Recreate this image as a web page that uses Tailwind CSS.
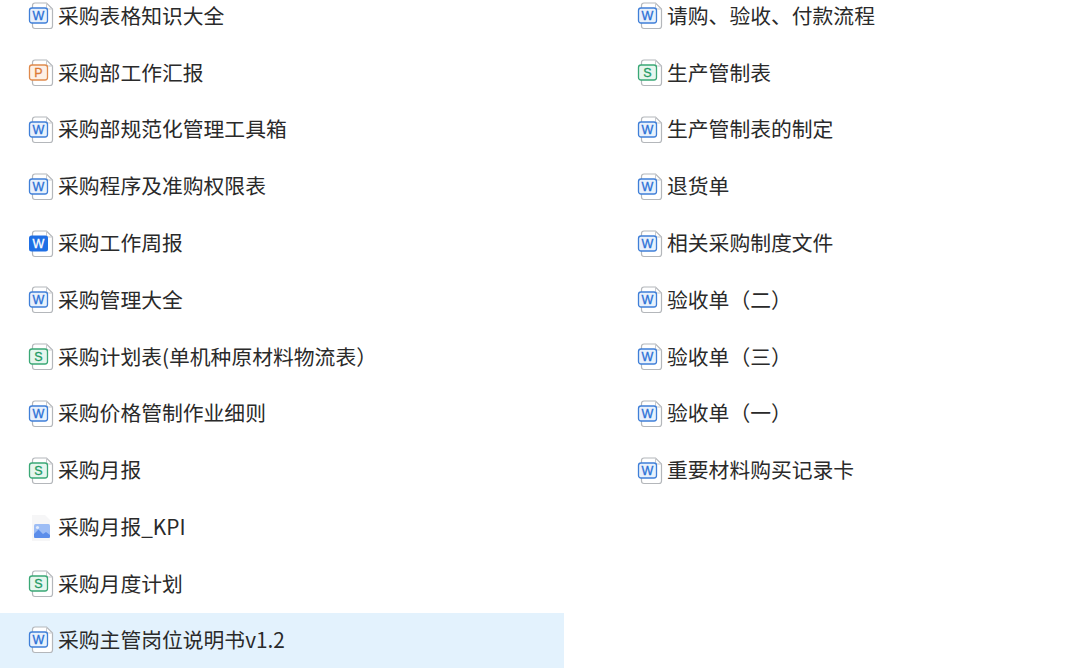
<!DOCTYPE html>
<html lang="zh-CN">
<head>
  <meta charset="UTF-8" />
  <title>采购文件</title>
  <script src="https://cdn.jsdelivr.net/npm/@tailwindcss/browser@4"></script>
</head>
<body class="h-[669px] overflow-hidden bg-white font-['Noto_Sans_CJK_SC',sans-serif] text-[20.8px] text-[#2a2a2a]">
  <svg class="hidden">
    <symbol id="page" viewBox="0 0 26 28">
      <path d="M4.5 3.5 Q4.5 1 7 1 H18.5 L24.5 7 V24 Q24.5 26.5 22 26.5 H7 Q4.5 26.5 4.5 24 Z" fill="#fff" stroke="#b4b7bb" stroke-width="1.2"/>
      <path d="M18.5 1 V5 Q18.5 7 20.5 7 H24.5" fill="none" stroke="#c9cbce" stroke-width="1"/>
    </symbol>
  </svg>

  <main class="-mt-[12px] flex">
    <!-- left column -->
    <ul class="w-[564px]">
      <li class="flex h-[56.8px] items-center pl-[28px]">
        <svg class="mr-[4px] h-[28px] w-[26px] font-['Liberation_Sans']" viewBox="0 0 26 28"><use href="#page"/><rect x="1.5" y="6" width="18" height="15" rx="2.5" fill="#e8f1fc" stroke="#3f7fd8" stroke-width="1.3"/><text x="10.5" y="18" text-anchor="middle" font-size="12.5" fill="#2a6fd6" stroke="#2a6fd6" stroke-width="0.3">W</text></svg>
        <span class="pb-[2px]">采购表格知识大全</span>
      </li>
      <li class="flex h-[56.8px] items-center pl-[28px]">
        <svg class="mr-[4px] h-[28px] w-[26px] font-['Liberation_Sans']" viewBox="0 0 26 28"><use href="#page"/><rect x="1.5" y="6" width="18" height="15" rx="2.5" fill="#fdf0e6" stroke="#e08a4c" stroke-width="1.3"/><text x="10.5" y="18" text-anchor="middle" font-size="12.5" fill="#dc7a36" stroke="#dc7a36" stroke-width="0.3">P</text></svg>
        <span class="pb-[2px]">采购部工作汇报</span>
      </li>
      <li class="flex h-[56.8px] items-center pl-[28px]">
        <svg class="mr-[4px] h-[28px] w-[26px] font-['Liberation_Sans']" viewBox="0 0 26 28"><use href="#page"/><rect x="1.5" y="6" width="18" height="15" rx="2.5" fill="#e8f1fc" stroke="#3f7fd8" stroke-width="1.3"/><text x="10.5" y="18" text-anchor="middle" font-size="12.5" fill="#2a6fd6" stroke="#2a6fd6" stroke-width="0.3">W</text></svg>
        <span class="pb-[2px]">采购部规范化管理工具箱</span>
      </li>
      <li class="flex h-[56.8px] items-center pl-[28px]">
        <svg class="mr-[4px] h-[28px] w-[26px] font-['Liberation_Sans']" viewBox="0 0 26 28"><use href="#page"/><rect x="1.5" y="6" width="18" height="15" rx="2.5" fill="#e8f1fc" stroke="#3f7fd8" stroke-width="1.3"/><text x="10.5" y="18" text-anchor="middle" font-size="12.5" fill="#2a6fd6" stroke="#2a6fd6" stroke-width="0.3">W</text></svg>
        <span class="pb-[2px]">采购程序及准购权限表</span>
      </li>
      <li class="flex h-[56.8px] items-center pl-[28px]">
        <svg class="mr-[4px] h-[28px] w-[26px] font-['Liberation_Sans']" viewBox="0 0 26 28"><use href="#page"/><rect x="1" y="5.5" width="19" height="16" rx="2.5" fill="#1f6fe5"/><text x="10.5" y="18" text-anchor="middle" font-size="12.5" fill="#fff" stroke="#fff" stroke-width="0.3">W</text></svg>
        <span class="pb-[2px]">采购工作周报</span>
      </li>
      <li class="flex h-[56.8px] items-center pl-[28px]">
        <svg class="mr-[4px] h-[28px] w-[26px] font-['Liberation_Sans']" viewBox="0 0 26 28"><use href="#page"/><rect x="1.5" y="6" width="18" height="15" rx="2.5" fill="#e8f1fc" stroke="#3f7fd8" stroke-width="1.3"/><text x="10.5" y="18" text-anchor="middle" font-size="12.5" fill="#2a6fd6" stroke="#2a6fd6" stroke-width="0.3">W</text></svg>
        <span class="pb-[2px]">采购管理大全</span>
      </li>
      <li class="flex h-[56.8px] items-center pl-[28px]">
        <svg class="mr-[4px] h-[28px] w-[26px] font-['Liberation_Sans']" viewBox="0 0 26 28"><use href="#page"/><rect x="1.5" y="6" width="18" height="15" rx="2.5" fill="#e6f6ee" stroke="#3aa876" stroke-width="1.3"/><text x="10.5" y="18" text-anchor="middle" font-size="12.5" fill="#1f9a63" stroke="#1f9a63" stroke-width="0.3">S</text></svg>
        <span class="pb-[2px]">采购计划表(单机种原材料物流表）</span>
      </li>
      <li class="flex h-[56.8px] items-center pl-[28px]">
        <svg class="mr-[4px] h-[28px] w-[26px] font-['Liberation_Sans']" viewBox="0 0 26 28"><use href="#page"/><rect x="1.5" y="6" width="18" height="15" rx="2.5" fill="#e8f1fc" stroke="#3f7fd8" stroke-width="1.3"/><text x="10.5" y="18" text-anchor="middle" font-size="12.5" fill="#2a6fd6" stroke="#2a6fd6" stroke-width="0.3">W</text></svg>
        <span class="pb-[2px]">采购价格管制作业细则</span>
      </li>
      <li class="flex h-[56.8px] items-center pl-[28px]">
        <svg class="mr-[4px] h-[28px] w-[26px] font-['Liberation_Sans']" viewBox="0 0 26 28"><use href="#page"/><rect x="1.5" y="6" width="18" height="15" rx="2.5" fill="#e6f6ee" stroke="#3aa876" stroke-width="1.3"/><text x="10.5" y="18" text-anchor="middle" font-size="12.5" fill="#1f9a63" stroke="#1f9a63" stroke-width="0.3">S</text></svg>
        <span class="pb-[2px]">采购月报</span>
      </li>
      <li class="flex h-[56.8px] items-center pl-[28px]">
        <svg class="mr-[4px] h-[28px] w-[26px]" viewBox="0 0 26 28">
          <path d="M4 1 H17 L22 6 V27 H4 Z" fill="#f6f6f7"/>
          <rect x="6" y="10" width="16" height="14" rx="1.5" fill="#9dbdf5"/>
          <path d="M6 22.5 V20 L10.5 15.5 L15 20 L18 18 L22 21 V22.5 Q22 24 20.5 24 H7.5 Q6 24 6 22.5 Z" fill="#5b8dea"/>
          <circle cx="9.5" cy="13.5" r="1.6" fill="#e2ecfc"/>
        </svg>
        <span class="pb-[2px]">采购月报_KPI</span>
      </li>
      <li class="flex h-[56.8px] items-center pl-[28px]">
        <svg class="mr-[4px] h-[28px] w-[26px] font-['Liberation_Sans']" viewBox="0 0 26 28"><use href="#page"/><rect x="1.5" y="6" width="18" height="15" rx="2.5" fill="#e6f6ee" stroke="#3aa876" stroke-width="1.3"/><text x="10.5" y="18" text-anchor="middle" font-size="12.5" fill="#1f9a63" stroke="#1f9a63" stroke-width="0.3">S</text></svg>
        <span class="pb-[2px]">采购月度计划</span>
      </li>
      <li class="flex h-[55.4px] items-center bg-[#e3f2fd] pl-[28px]">
        <svg class="mr-[4px] h-[28px] w-[26px] font-['Liberation_Sans']" viewBox="0 0 26 28"><use href="#page"/><rect x="1.5" y="6" width="18" height="15" rx="2.5" fill="#e8f1fc" stroke="#3f7fd8" stroke-width="1.3"/><text x="10.5" y="18" text-anchor="middle" font-size="12.5" fill="#2a6fd6" stroke="#2a6fd6" stroke-width="0.3">W</text></svg>
        <span class="pb-[2px]">采购主管岗位说明书v1.2</span>
      </li>
    </ul>

    <!-- right column -->
    <ul class="ml-[46px] flex-1">
      <li class="flex h-[56.8px] items-center pl-[27px]">
        <svg class="mr-[4px] h-[28px] w-[26px] font-['Liberation_Sans']" viewBox="0 0 26 28"><use href="#page"/><rect x="1.5" y="6" width="18" height="15" rx="2.5" fill="#e8f1fc" stroke="#3f7fd8" stroke-width="1.3"/><text x="10.5" y="18" text-anchor="middle" font-size="12.5" fill="#2a6fd6" stroke="#2a6fd6" stroke-width="0.3">W</text></svg>
        <span class="pb-[2px]">请购、验收、付款流程</span>
      </li>
      <li class="flex h-[56.8px] items-center pl-[27px]">
        <svg class="mr-[4px] h-[28px] w-[26px] font-['Liberation_Sans']" viewBox="0 0 26 28"><use href="#page"/><rect x="1.5" y="6" width="18" height="15" rx="2.5" fill="#e6f6ee" stroke="#3aa876" stroke-width="1.3"/><text x="10.5" y="18" text-anchor="middle" font-size="12.5" fill="#1f9a63" stroke="#1f9a63" stroke-width="0.3">S</text></svg>
        <span class="pb-[2px]">生产管制表</span>
      </li>
      <li class="flex h-[56.8px] items-center pl-[27px]">
        <svg class="mr-[4px] h-[28px] w-[26px] font-['Liberation_Sans']" viewBox="0 0 26 28"><use href="#page"/><rect x="1.5" y="6" width="18" height="15" rx="2.5" fill="#e8f1fc" stroke="#3f7fd8" stroke-width="1.3"/><text x="10.5" y="18" text-anchor="middle" font-size="12.5" fill="#2a6fd6" stroke="#2a6fd6" stroke-width="0.3">W</text></svg>
        <span class="pb-[2px]">生产管制表的制定</span>
      </li>
      <li class="flex h-[56.8px] items-center pl-[27px]">
        <svg class="mr-[4px] h-[28px] w-[26px] font-['Liberation_Sans']" viewBox="0 0 26 28"><use href="#page"/><rect x="1.5" y="6" width="18" height="15" rx="2.5" fill="#e8f1fc" stroke="#3f7fd8" stroke-width="1.3"/><text x="10.5" y="18" text-anchor="middle" font-size="12.5" fill="#2a6fd6" stroke="#2a6fd6" stroke-width="0.3">W</text></svg>
        <span class="pb-[2px]">退货单</span>
      </li>
      <li class="flex h-[56.8px] items-center pl-[27px]">
        <svg class="mr-[4px] h-[28px] w-[26px] font-['Liberation_Sans']" viewBox="0 0 26 28"><use href="#page"/><rect x="1.5" y="6" width="18" height="15" rx="2.5" fill="#e8f1fc" stroke="#3f7fd8" stroke-width="1.3"/><text x="10.5" y="18" text-anchor="middle" font-size="12.5" fill="#2a6fd6" stroke="#2a6fd6" stroke-width="0.3">W</text></svg>
        <span class="pb-[2px]">相关采购制度文件</span>
      </li>
      <li class="flex h-[56.8px] items-center pl-[27px]">
        <svg class="mr-[4px] h-[28px] w-[26px] font-['Liberation_Sans']" viewBox="0 0 26 28"><use href="#page"/><rect x="1.5" y="6" width="18" height="15" rx="2.5" fill="#e8f1fc" stroke="#3f7fd8" stroke-width="1.3"/><text x="10.5" y="18" text-anchor="middle" font-size="12.5" fill="#2a6fd6" stroke="#2a6fd6" stroke-width="0.3">W</text></svg>
        <span class="pb-[2px]">验收单（二）</span>
      </li>
      <li class="flex h-[56.8px] items-center pl-[27px]">
        <svg class="mr-[4px] h-[28px] w-[26px] font-['Liberation_Sans']" viewBox="0 0 26 28"><use href="#page"/><rect x="1.5" y="6" width="18" height="15" rx="2.5" fill="#e8f1fc" stroke="#3f7fd8" stroke-width="1.3"/><text x="10.5" y="18" text-anchor="middle" font-size="12.5" fill="#2a6fd6" stroke="#2a6fd6" stroke-width="0.3">W</text></svg>
        <span class="pb-[2px]">验收单（三）</span>
      </li>
      <li class="flex h-[56.8px] items-center pl-[27px]">
        <svg class="mr-[4px] h-[28px] w-[26px] font-['Liberation_Sans']" viewBox="0 0 26 28"><use href="#page"/><rect x="1.5" y="6" width="18" height="15" rx="2.5" fill="#e8f1fc" stroke="#3f7fd8" stroke-width="1.3"/><text x="10.5" y="18" text-anchor="middle" font-size="12.5" fill="#2a6fd6" stroke="#2a6fd6" stroke-width="0.3">W</text></svg>
        <span class="pb-[2px]">验收单（一）</span>
      </li>
      <li class="flex h-[56.8px] items-center pl-[27px]">
        <svg class="mr-[4px] h-[28px] w-[26px] font-['Liberation_Sans']" viewBox="0 0 26 28"><use href="#page"/><rect x="1.5" y="6" width="18" height="15" rx="2.5" fill="#e8f1fc" stroke="#3f7fd8" stroke-width="1.3"/><text x="10.5" y="18" text-anchor="middle" font-size="12.5" fill="#2a6fd6" stroke="#2a6fd6" stroke-width="0.3">W</text></svg>
        <span class="pb-[2px]">重要材料购买记录卡</span>
      </li>
    </ul>
  </main>
</body>
</html>
